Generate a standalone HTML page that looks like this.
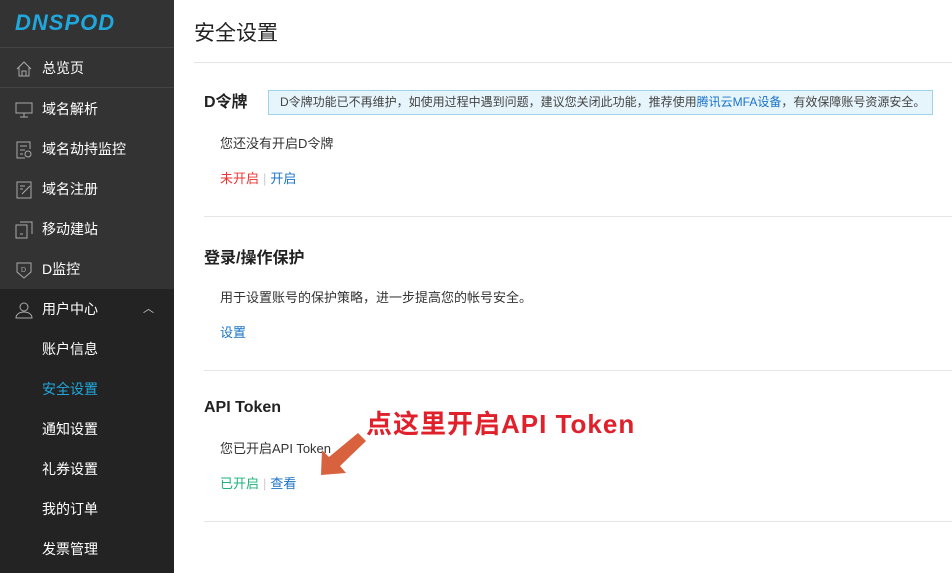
<!DOCTYPE html><html><head><meta charset="utf-8"><style>
*{margin:0;padding:0;box-sizing:border-box}
html,body{width:952px;height:573px;overflow:hidden}
body{background:#fff;font-family:"Liberation Sans","Noto Sans CJK SC",sans-serif;position:relative}
.sb{position:absolute;left:0;top:0;width:174px;height:573px;background:#333;overflow:hidden}
.logo{height:48px;border-bottom:1px solid #444;padding:10px 0 0 15px;font:italic bold 22px "Liberation Sans",sans-serif;color:#1fa8de;letter-spacing:1px}
.it{height:40px;line-height:40px;color:#fff;font-size:14px;padding-left:42px;position:relative}
.it svg{position:absolute;left:15px;top:12px}
.sub{background:#232323;height:300px}
.main{position:absolute;left:174px;top:0;right:0}
h1{font-weight:normal;font-size:21px;color:#222;position:absolute;left:20px;top:17px}
.hl{position:absolute;left:20px;right:0;top:62px;border-top:1px solid #e5e5e5}
.sec{position:absolute;left:30px;right:0;border-bottom:1px solid #e5e5e5}
.sec h2{font-size:16px;color:#222;font-weight:bold}
.p{font-size:13px;color:#333;position:absolute;left:16px}
.l{font-size:13px;position:absolute;left:16px}
.sep{color:#ccc;margin:0 4px}
.tip{position:absolute;left:64px;top:2px;width:665px;height:25px;background:#e6f4fb;border:1px solid #9fd3e8;font-size:12px;color:#444;line-height:23px;padding-left:11px}
</style></head><body>
<div class="sb">
<div class="logo">DNSPOD</div>
<div class="it" style="border-bottom:1px solid #444"><svg width="18" height="18" fill="none" stroke="#aaa"><path d="M2 9L9 2l7 7M4 7v9h10V7M7 16v-5h4v5"/></svg>总览页</div>
<div class="it" style="margin-top:1px"><svg width="18" height="18" fill="none" stroke="#aaa"><rect x="1" y="2" width="16" height="10"/><path d="M9 12v4M5 16h8"/></svg>域名解析</div>
<div class="it"><svg width="18" height="18" fill="none" stroke="#aaa"><path d="M15 8V1H2v16h8M5 5h7M5 9h5M5 13h3"/><circle cx="13" cy="13" r="3"/></svg>域名劫持监控</div>
<div class="it"><svg width="18" height="18" fill="none" stroke="#aaa"><rect x="2" y="1" width="14" height="16"/><path d="M5 5h5M5 8h3M7 13l8-8"/></svg>域名注册</div>
<div class="it"><svg width="18" height="18" fill="none" stroke="#aaa"><rect x="1" y="4" width="11" height="13"/><path d="M5 1h12v12M5 13h3"/></svg>移动建站</div>
<div class="it"><svg width="18" height="18" fill="none" stroke="#aaa"><path d="M2 2h14v9l-7 6-7-6z"/><text x="6" y="11" font-size="7" fill="#aaa" stroke="none">D</text></svg>D监控</div>
<div class="sub">
<div class="it"><svg width="18" height="18" fill="none" stroke="#aaa"><circle cx="9" cy="6" r="4"/><path d="M1 17c0-4 4-6 8-6s8 2 8 6z"/></svg>用户中心<span style="position:absolute;right:20px;color:#ccc;font-size:11px">︿</span></div>
<div class="it">账户信息</div>
<div class="it" style="color:#1fa8de">安全设置</div>
<div class="it">通知设置</div>
<div class="it">礼券设置</div>
<div class="it">我的订单</div>
<div class="it">发票管理</div>
</div>
</div>
<div class="main">
<h1>安全设置</h1>
<div class="hl"></div>
<div class="sec" style="top:88px;height:129px"><h2>D令牌</h2>
<div class="tip">D令牌功能已不再维护，如使用过程中遇到问题，建议您关闭此功能，推荐使用<span style="color:#1a73c7">腾讯云MFA设备</span>，有效保障账号资源安全。</div>
<div class="p" style="top:45px">您还没有开启D令牌</div>
<div class="l" style="top:80px"><span style="color:#e33">未开启</span><span class="sep">|</span><span style="color:#1a73c7">开启</span></div></div>
<div class="sec" style="top:244px;height:127px"><h2>登录/操作保护</h2>
<div class="p" style="top:43px">用于设置账号的保护策略，进一步提高您的帐号安全。</div>
<div class="l" style="top:78px;color:#1a73c7">设置</div></div>
<div class="sec" style="top:399px;height:123px"><h2>API Token</h2>
<div class="p" style="top:39px">您已开启API Token</div>
<div class="l" style="top:74px"><span style="color:#1bb27a">已开启</span><span class="sep">|</span><span style="color:#1a73c7">查看</span></div></div>
<div style="position:absolute;left:192px;top:404px;font-size:26px;font-weight:bold;color:#e0202a;letter-spacing:1px">点这里开启API Token</div>
<svg style="position:absolute;left:142px;top:430px" width="50" height="50"><polygon points="42,3 50,11 24,36 30,43 5,45 6,20 13,27" fill="#d8613e"/></svg>
</div>
</body></html>
